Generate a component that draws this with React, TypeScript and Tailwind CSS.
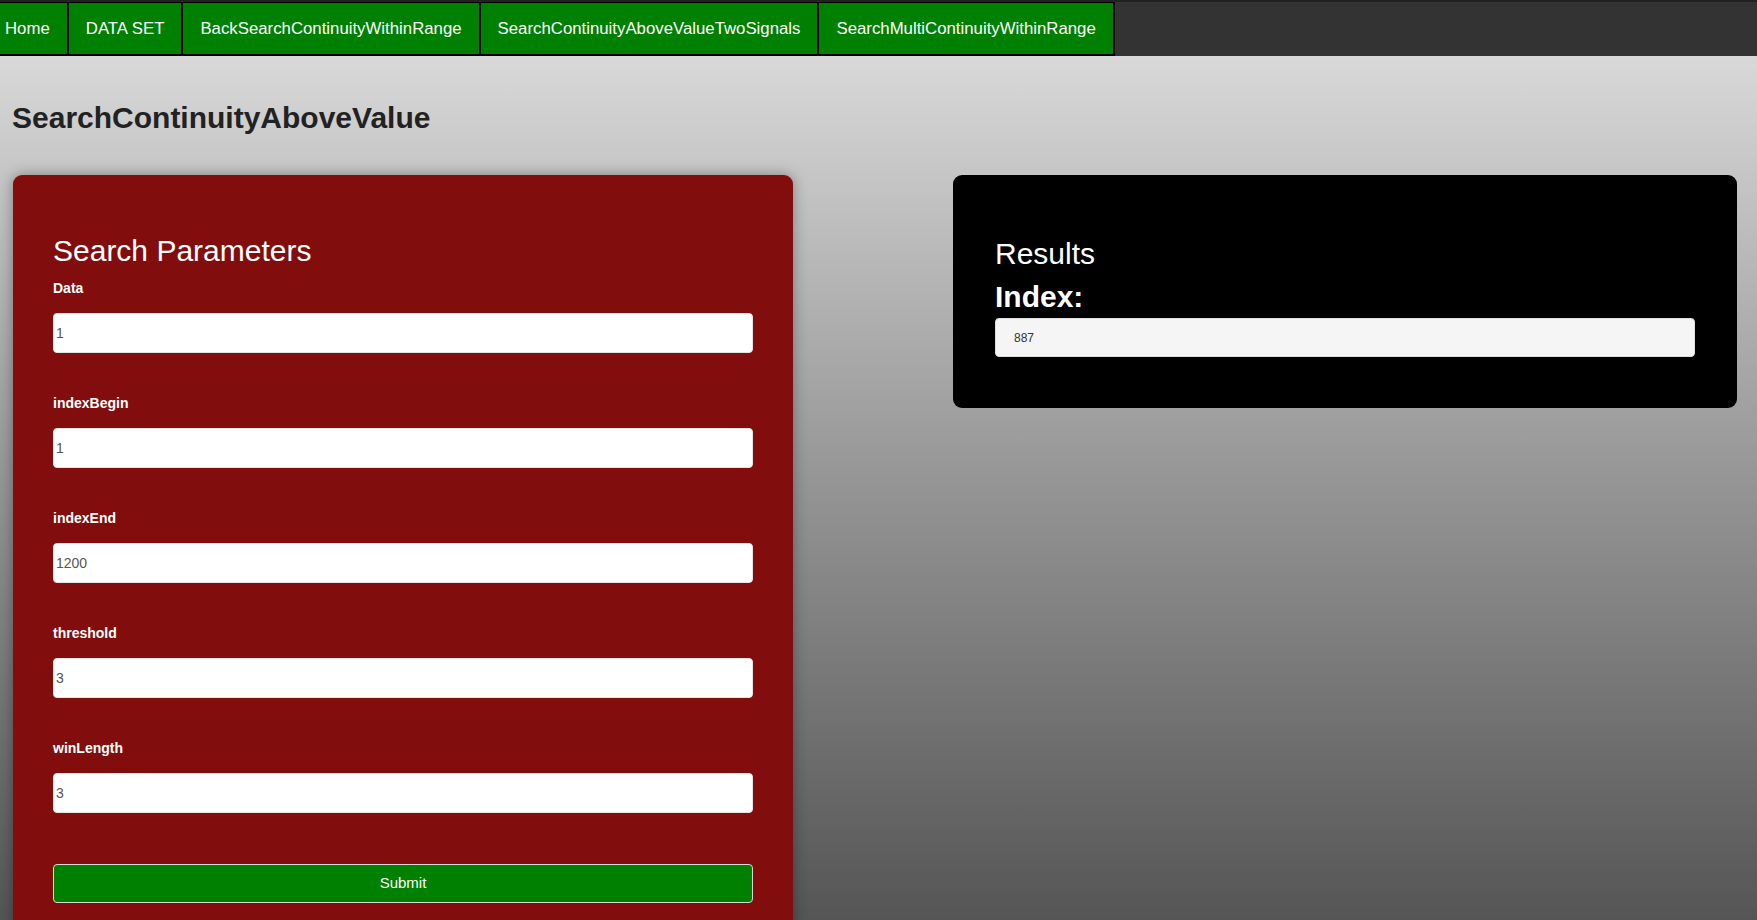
import React from 'react'

const navItems = [
  'DATA SET',
  'BackSearchContinuityWithinRange',
  'SearchContinuityAboveValueTwoSignals',
  'SearchMultiContinuityWithinRange',
]

const fields = [
  { label: 'Data', value: '1' },
  { label: 'indexBegin', value: '1' },
  { label: 'indexEnd', value: '1200' },
  { label: 'threshold', value: '3' },
  { label: 'winLength', value: '3' },
]

function NavBar() {
  return (
    <nav className="flex h-[56px] bg-[#333333] border-t-[2px] border-[#222222]">
      <a className="flex items-center pl-[5px] pr-[17px] bg-[#008000] text-white text-[16.8px] border-t border-b-2 border-r-2 border-black">
        Home
      </a>
      {navItems.map((item) => (
        <a
          key={item}
          className="flex items-center px-[17px] bg-[#008000] text-white text-[16.8px] border-t border-b-2 border-r-2 border-black"
        >
          {item}
        </a>
      ))}
    </nav>
  )
}

function SearchForm() {
  return (
    <div className="bg-[#820d0d] rounded-[9px] px-[40px] pt-[59px] pb-[40px] shadow-[0_0_14px_rgba(0,0,0,0.35)]">
      <h2 className="text-white text-[30px] leading-[34px]">Search Parameters</h2>
      <div className="mt-[12px] flex flex-col gap-[42px]">
        {fields.map((f) => (
          <div key={f.label}>
            <label className="block text-white text-[14px] leading-[16px] font-bold">
              {f.label}
            </label>
            <input
              readOnly
              value={f.value}
              className="mt-[17px] block w-full h-[40px] bg-white rounded-[4px] border border-[#e5e5e5] pl-[2px] text-[14px] text-[#555555] outline-none"
            />
          </div>
        ))}
      </div>
      <button
        type="button"
        className="mt-[51px] w-full h-[39px] bg-[#008000] text-white text-[15px] rounded-[4px] border border-[#d8d8d8]"
      >
        Submit
      </button>
    </div>
  )
}

function Results() {
  return (
    <div className="bg-black rounded-[9px] px-[42px] pt-[62px] pb-[51px]">
      <h2 className="text-white text-[30px] leading-[34px]">Results</h2>
      <h3 className="mt-[9px] text-white text-[30px] leading-[34px] font-bold">Index:</h3>
      <div className="mt-[4px] h-[39px] flex items-center bg-[#f5f5f5] rounded-[4px] border border-[#dddddd] pl-[18px] text-[12px] text-[#333333]">
        887
      </div>
    </div>
  )
}

export default function App() {
  return (
    <div
      className="min-h-screen bg-gradient-to-b from-[#e2e2e2] to-[#525252]"
      style={{ fontFamily: '"Liberation Sans", Arial, sans-serif' }}
    >
      <NavBar />
      <h1 className="ml-[12px] mt-[45px] text-[30px] leading-[34px] font-bold text-[#222222]">
        SearchContinuityAboveValue
      </h1>
      <div className="mt-[40px] px-[13px] grid grid-cols-[780px_784px] gap-[160px] items-start">
        <SearchForm />
        <Results />
      </div>
    </div>
  )
}
